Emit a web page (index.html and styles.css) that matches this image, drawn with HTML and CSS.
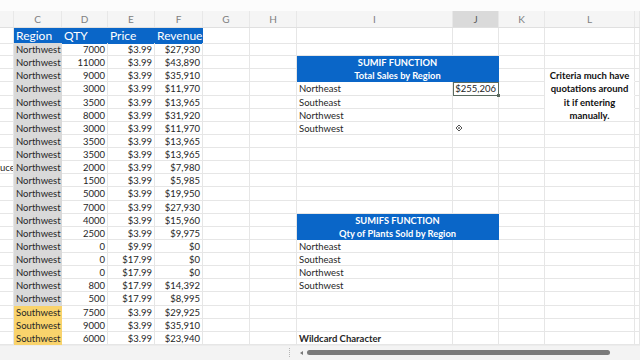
FILE: index.html
```html
<!DOCTYPE html>
<html>
<head>
<meta charset="utf-8">
<link rel="stylesheet" href="styles.css">
</head>
<body>
<div class="app">
  <div class="topgap"></div>
  <div class="row colhead">
    <div class="h"></div><div class="h">C</div><div class="h">D</div><div class="h">E</div><div class="h">F</div><div class="h">G</div><div class="h">H</div><div class="h">I</div><div class="h sel">J</div><div class="h">K</div><div class="h">L</div><div class="h"></div>
  </div>
  <div class="row hdr">
    <div class="c"></div><div class="c blue">Region</div><div class="c blue">QTY</div><div class="c blue">Price</div><div class="c blue">Revenue</div><div class="c"></div><div class="c"></div><div class="c"></div><div class="c"></div><div class="c"></div><div class="c"></div><div class="c"></div>
  </div>
  <!-- 1 -->
  <div class="row">
    <div class="c"></div><div class="c rg">Northwest</div><div class="c n">7000</div><div class="c n">$3.99</div><div class="c n">$27,930</div><div class="c"></div><div class="c"></div><div class="c"></div><div class="c"></div><div class="c"></div><div class="c"></div><div class="c"></div>
  </div>
  <!-- 2 -->
  <div class="row">
    <div class="c"></div><div class="c rg">Northwest</div><div class="c n">11000</div><div class="c n">$3.99</div><div class="c n">$43,890</div><div class="c"></div><div class="c"></div><div class="c band">SUMIF FUNCTION</div><div class="c"></div><div class="c"></div><div class="c"></div>
  </div>
  <!-- 3 -->
  <div class="row">
    <div class="c"></div><div class="c rg">Northwest</div><div class="c n">9000</div><div class="c n">$3.99</div><div class="c n">$35,910</div><div class="c"></div><div class="c"></div><div class="c band">Total Sales by Region</div><div class="c"></div><div class="c crit">Criteria much have</div><div class="c"></div>
  </div>
  <!-- 4 -->
  <div class="row">
    <div class="c"></div><div class="c rg">Northwest</div><div class="c n">3000</div><div class="c n">$3.99</div><div class="c n">$11,970</div><div class="c"></div><div class="c"></div><div class="c">Northeast</div><div class="c n active">$255,206</div><div class="c"></div><div class="c crit">quotations around</div><div class="c"></div>
  </div>
  <!-- 5 -->
  <div class="row">
    <div class="c"></div><div class="c rg">Northwest</div><div class="c n">3500</div><div class="c n">$3.99</div><div class="c n">$13,965</div><div class="c"></div><div class="c"></div><div class="c">Southeast</div><div class="c"></div><div class="c"></div><div class="c crit">it if entering</div><div class="c"></div>
  </div>
  <!-- 6 -->
  <div class="row">
    <div class="c"></div><div class="c rg">Northwest</div><div class="c n">8000</div><div class="c n">$3.99</div><div class="c n">$31,920</div><div class="c"></div><div class="c"></div><div class="c">Northwest</div><div class="c"></div><div class="c"></div><div class="c crit last">manually.</div><div class="c"></div>
  </div>
  <!-- 7 -->
  <div class="row">
    <div class="c"></div><div class="c rg">Northwest</div><div class="c n">3000</div><div class="c n">$3.99</div><div class="c n">$11,970</div><div class="c"></div><div class="c"></div><div class="c">Southwest</div><div class="c cur"><svg class="pointer" width="10" height="10" viewBox="0 0 10 10"><path d="M2 5 L5 2 L8 5 L5 8 Z" fill="#fff" stroke="#555" stroke-width="1"/><path d="M4 5 L6 5 M5 4 L5 6" stroke="#555" stroke-width="0.8"/></svg></div><div class="c"></div><div class="c"></div><div class="c"></div>
  </div>
  <!-- 8 -->
  <div class="row">
    <div class="c"></div><div class="c rg">Northwest</div><div class="c n">3500</div><div class="c n">$3.99</div><div class="c n">$13,965</div><div class="c"></div><div class="c"></div><div class="c"></div><div class="c"></div><div class="c"></div><div class="c"></div><div class="c"></div>
  </div>
  <!-- 9 -->
  <div class="row">
    <div class="c"></div><div class="c rg">Northwest</div><div class="c n">3500</div><div class="c n">$3.99</div><div class="c n">$13,965</div><div class="c"></div><div class="c"></div><div class="c"></div><div class="c"></div><div class="c"></div><div class="c"></div><div class="c"></div>
  </div>
  <!-- 10 -->
  <div class="row">
    <div class="c clip">uce</div><div class="c rg">Northwest</div><div class="c n">2000</div><div class="c n">$3.99</div><div class="c n">$7,980</div><div class="c"></div><div class="c"></div><div class="c"></div><div class="c"></div><div class="c"></div><div class="c"></div><div class="c"></div>
  </div>
  <!-- 11 -->
  <div class="row">
    <div class="c"></div><div class="c rg">Northwest</div><div class="c n">1500</div><div class="c n">$3.99</div><div class="c n">$5,985</div><div class="c"></div><div class="c"></div><div class="c"></div><div class="c"></div><div class="c"></div><div class="c"></div><div class="c"></div>
  </div>
  <!-- 12 -->
  <div class="row">
    <div class="c"></div><div class="c rg">Northwest</div><div class="c n">5000</div><div class="c n">$3.99</div><div class="c n">$19,950</div><div class="c"></div><div class="c"></div><div class="c"></div><div class="c"></div><div class="c"></div><div class="c"></div><div class="c"></div>
  </div>
  <!-- 13 -->
  <div class="row">
    <div class="c"></div><div class="c rg">Northwest</div><div class="c n">7000</div><div class="c n">$3.99</div><div class="c n">$27,930</div><div class="c"></div><div class="c"></div><div class="c"></div><div class="c"></div><div class="c"></div><div class="c"></div><div class="c"></div>
  </div>
  <!-- 14 -->
  <div class="row">
    <div class="c"></div><div class="c rg">Northwest</div><div class="c n">4000</div><div class="c n">$3.99</div><div class="c n">$15,960</div><div class="c"></div><div class="c"></div><div class="c band">SUMIFS FUNCTION</div><div class="c"></div><div class="c"></div><div class="c"></div>
  </div>
  <!-- 15 -->
  <div class="row">
    <div class="c"></div><div class="c rg">Northwest</div><div class="c n">2500</div><div class="c n">$3.99</div><div class="c n">$9,975</div><div class="c"></div><div class="c"></div><div class="c band">Qty of Plants Sold by Region</div><div class="c"></div><div class="c"></div><div class="c"></div>
  </div>
  <!-- 16 -->
  <div class="row">
    <div class="c"></div><div class="c rg">Northwest</div><div class="c n">0</div><div class="c n">$9.99</div><div class="c n">$0</div><div class="c"></div><div class="c"></div><div class="c">Northeast</div><div class="c"></div><div class="c"></div><div class="c"></div><div class="c"></div>
  </div>
  <!-- 17 -->
  <div class="row">
    <div class="c"></div><div class="c rg">Northwest</div><div class="c n">0</div><div class="c n">$17.99</div><div class="c n">$0</div><div class="c"></div><div class="c"></div><div class="c">Southeast</div><div class="c"></div><div class="c"></div><div class="c"></div><div class="c"></div>
  </div>
  <!-- 18 -->
  <div class="row">
    <div class="c"></div><div class="c rg">Northwest</div><div class="c n">0</div><div class="c n">$17.99</div><div class="c n">$0</div><div class="c"></div><div class="c"></div><div class="c">Northwest</div><div class="c"></div><div class="c"></div><div class="c"></div><div class="c"></div>
  </div>
  <!-- 19 -->
  <div class="row">
    <div class="c"></div><div class="c rg">Northwest</div><div class="c n">800</div><div class="c n">$17.99</div><div class="c n">$14,392</div><div class="c"></div><div class="c"></div><div class="c">Southwest</div><div class="c"></div><div class="c"></div><div class="c"></div><div class="c"></div>
  </div>
  <!-- 20 -->
  <div class="row">
    <div class="c"></div><div class="c rg">Northwest</div><div class="c n">500</div><div class="c n">$17.99</div><div class="c n">$8,995</div><div class="c"></div><div class="c"></div><div class="c"></div><div class="c"></div><div class="c"></div><div class="c"></div><div class="c"></div>
  </div>
  <!-- 21 -->
  <div class="row">
    <div class="c"></div><div class="c sw">Southwest</div><div class="c n">7500</div><div class="c n">$3.99</div><div class="c n">$29,925</div><div class="c"></div><div class="c"></div><div class="c"></div><div class="c"></div><div class="c"></div><div class="c"></div><div class="c"></div>
  </div>
  <!-- 22 -->
  <div class="row">
    <div class="c"></div><div class="c sw">Southwest</div><div class="c n">9000</div><div class="c n">$3.99</div><div class="c n">$35,910</div><div class="c"></div><div class="c"></div><div class="c"></div><div class="c"></div><div class="c"></div><div class="c"></div><div class="c"></div>
  </div>
  <!-- 23 -->
  <div class="row">
    <div class="c"></div><div class="c sw">Southwest</div><div class="c n">6000</div><div class="c n">$3.99</div><div class="c n">$23,940</div><div class="c"></div><div class="c"></div><div class="c b">Wildcard Character</div><div class="c"></div><div class="c"></div><div class="c"></div><div class="c"></div>
  </div>
  <div class="bottombar">
    <div class="tabs"></div>
    <div class="grip"></div>
    <div class="arrow"></div>
    <div class="thumb"></div>
  </div>
</div>
</body>
</html>
```

FILE: styles.css
```css
* { box-sizing: border-box; }
html, body { margin: 0; padding: 0; background: #fff; }
body { width: 640px; height: 360px; overflow: hidden; font-family: Lato, "Liberation Sans", sans-serif; }

.app { width: 640px; height: 360px; display: flex; flex-direction: column; }

.topgap { height: 11px; background: #fcfcfc; flex: none; }

.row {
  display: grid;
  grid-template-columns: 14px 48px 46px 47px 48px 47px 47px 156px 46px 46px 90px 5px;
  height: 13.14px;
  flex: none;
}

.colhead { height: 17px; background: #f5f5f5; border-bottom: 1px solid #e0e0e0; }
.h {
  font-size: 10px; color: #808080; text-align: center; line-height: 16px;
  border-right: 1px solid #e8e8e8;
}
.h.sel { background: #dadada; color: #5a5a5a; }

.hdr { height: 15px; }

.c {
  font-size: 9.5px;
  line-height: 13px;
  color: #262626;
  border-right: 1px solid #e6e6e6;
  border-bottom: 1px solid #e6e6e6;
  padding: 0 2px;
  white-space: nowrap;
  overflow: hidden;
}

.hdr .c { line-height: 15px; }
.c.blue {
  background: #0a66c8;
  color: #fff;
  font-size: 12px;
  border-color: #0a66c8;
  overflow: visible;
}

.c.rg { background: #d9d9d9; border-bottom-color: #d9d9d9; border-right-color: #d9d9d9; }
.c.sw { background: #f9d36c; border-bottom-color: #f9d36c; border-right-color: #f9d36c; }
.c.n { text-align: right; }

.c.band {
  grid-column: span 2;
  background: #0a66c8;
  border-color: #0a66c8;
  color: #fff;
  font-weight: 700;
  text-align: center;
  font-size: 9.3px;
}

.c.crit {
  font-weight: 700;
  text-align: center;
  border-bottom-color: transparent;
  color: #111;
}
.c.crit.last { border-bottom-color: #e6e6e6; }

.c.b { font-weight: 700; }

.c.clip { text-align: right; padding: 0 1px 0 0; }

.c.active {
  outline: 1px solid #5b6b60;
  outline-offset: -1px;
  position: relative;
  overflow: visible;
}
.c.active::after {
  content: "";
  position: absolute;
  right: -2px; bottom: -2px;
  width: 3px; height: 3px;
  background: #5b6b60;
}

.c.cur { position: relative; overflow: visible; }
.pointer { position: absolute; left: 1px; top: 1px; }

.bottombar {
  flex: 1;
  background: #f3f3f3;
  display: flex;
  align-items: center;
  border-top: 1px solid #ececec;
}
.tabs { width: 289px; height: 100%; }
.grip {
  width: 1px; height: 9px;
  border-left: 1px dotted #b5b5b5;
}
.arrow {
  width: 0; height: 0;
  margin-left: 10px;
  border-top: 2.5px solid transparent;
  border-bottom: 2.5px solid transparent;
  border-right: 3px solid #777;
}
.thumb {
  margin-left: 4px;
  width: 303px; height: 5px;
  border-radius: 3px;
  background: #7a7a7a;
}
```
